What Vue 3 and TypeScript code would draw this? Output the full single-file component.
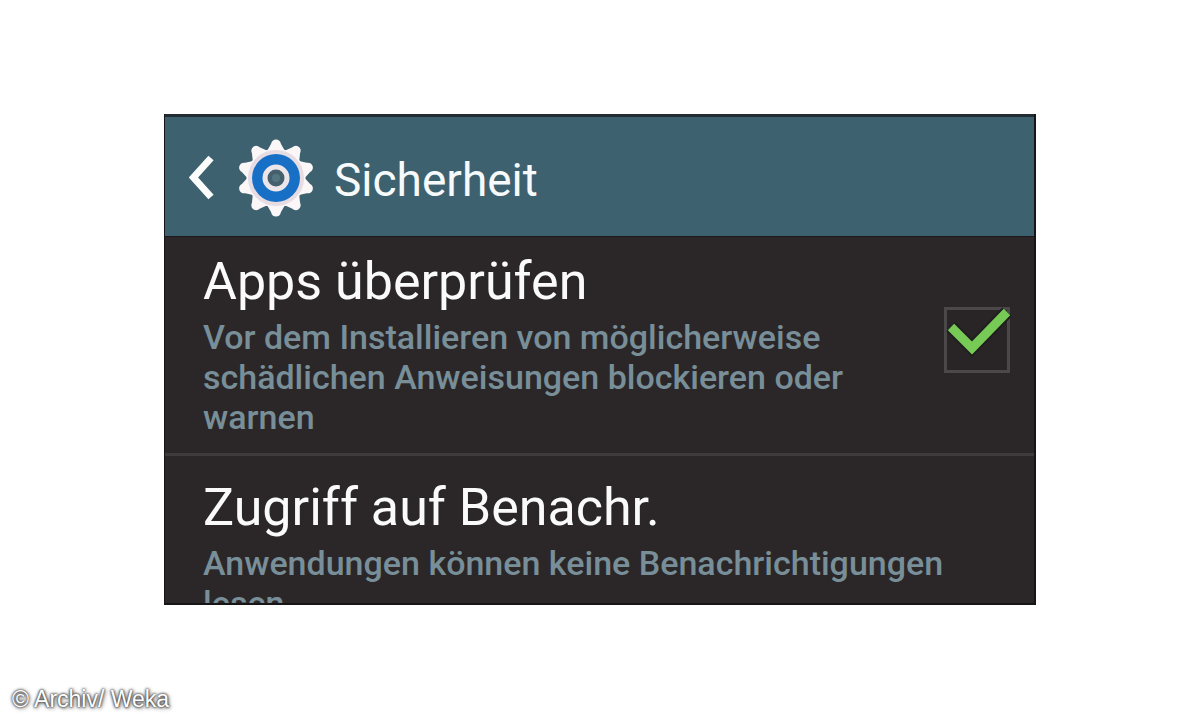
<script setup lang="ts">
import { ref } from 'vue'

const verifyApps = ref<boolean>(true)
const teeth: number[] = Array.from({ length: 10 }, (_, i) => i * 36)
</script>

<template>
  <figure class="page">
    <main class="panel">
      <header class="bar">
        <button class="back" type="button" aria-label="Zurück">
          <svg width="26" height="46" viewBox="0 0 26 46" aria-hidden="true">
            <path d="M22 3 L4.500 22.500 L22 42" fill="none" stroke="#fbfdfd" stroke-width="7" />
          </svg>
        </button>
        <svg class="gear" width="78" height="78" viewBox="-39 -39 78 78" aria-hidden="true">
          <g fill="#fbf7f8">
            <path
              v-for="angle in teeth"
              :key="angle"
              d="M-9 -27 L-5 -34 Q-4 -38.500 0 -38.500 Q4 -38.500 5 -34 L9 -27 Z"
              :transform="`rotate(${angle})`"
            />
            <circle r="29.500" />
          </g>
          <circle r="26" fill="none" stroke="#e6dce2" stroke-width="4" />
          <circle r="24" fill="#1770c6" />
          <circle r="11" fill="#45606c" stroke="#ece5e9" stroke-width="5" />
          <circle r="4" fill="#54757f" />
        </svg>
        <h1 class="heading">Sicherheit</h1>
      </header>

      <section class="row">
        <div class="copy">
          <label class="title" for="verify-apps">Apps überprüfen</label>
          <p id="verify-text" class="text">
            Vor dem Installieren von möglicherweise schädlichen Anweisungen blockieren oder warnen
          </p>
        </div>
        <span class="check">
          <input id="verify-apps" v-model="verifyApps" type="checkbox" aria-describedby="verify-text" />
          <svg v-if="verifyApps" class="tick" width="66" height="66" viewBox="0 0 66 66" aria-hidden="true">
            <path d="M7 20 L28 41 L63 5" fill="none" stroke="#201d1e" stroke-width="13" />
            <path d="M7 20 L28 41 L63 5" fill="none" stroke="#76ca55" stroke-width="9" />
          </svg>
        </span>
      </section>

      <section class="row next">
        <div class="copy">
          <h2 class="title">Zugriff auf Benachr.</h2>
          <p class="text">Anwendungen können keine Benachrichtigungen lesen</p>
        </div>
      </section>
    </main>
    <figcaption class="credit">© Archiv/ Weka</figcaption>
  </figure>
</template>

<style>
body {
  margin: 0;
  background: #fff;
}
</style>

<style scoped>
.page {
  box-sizing: border-box;
  display: flex;
  flex-direction: column;
  min-height: 100vh;
  margin: 0;
  padding-top: 114px;
  font-family: Roboto, "Liberation Sans", sans-serif;
}

.panel {
  box-sizing: border-box;
  margin: 0 164px;
  aspect-ratio: 872 / 491;
  min-height: 0;
  overflow: hidden;
  background: #2b2728;
  border: solid #171516;
  border-width: 0 2px 2px 1px;
}

.bar {
  display: flex;
  align-items: center;
  padding: 2px 24px 0;
  height: 117px;
  background: #3e6170;
  border-top: 3px solid #222d33;
}

.back {
  display: flex;
  padding: 0;
  border: 0;
  background: none;
}

.gear {
  margin-left: 22px;
}

.heading {
  margin: 0;
  padding: 4px 0 0 19px;
  font-size: 46px;
  line-height: 54px;
  font-weight: 400;
  color: #f6fafb;
}

.row {
  display: flex;
  align-items: center;
  justify-content: space-between;
  padding: 15px 24px 16px 38px;
  border-top: 1px solid #1c191a;
}

.next {
  padding-top: 22px;
  border-top: 3px solid #3f3b3c;
}

.copy {
  flex: 1;
}

.title {
  display: block;
  margin: 0 0 5px;
  font-size: 52px;
  line-height: 60px;
  font-weight: 400;
  color: #fafafa;
}

.text {
  margin: 0;
  font-size: 34px;
  font-weight: 500;
  line-height: 40px;
  color: #788f99;
}

.check {
  position: relative;
  display: flex;
  margin: 0 0 10px 20px;
}

.check input {
  appearance: none;
  box-sizing: border-box;
  width: 66px;
  height: 66px;
  margin: 0;
  border: 3px solid #4b484a;
  background: #292526;
}

.tick {
  position: absolute;
  inset: 0;
  overflow: visible;
  pointer-events: none;
}

.credit {
  margin-top: auto;
  padding: 0 12px 7px;
  font-family: "Liberation Sans", sans-serif;
  font-size: 23px;
  line-height: 28px;
  color: #fff;
  text-shadow: 0 0 2px #333, 0 0 3px #444, 1px 1px 4px #555;
}
</style>
